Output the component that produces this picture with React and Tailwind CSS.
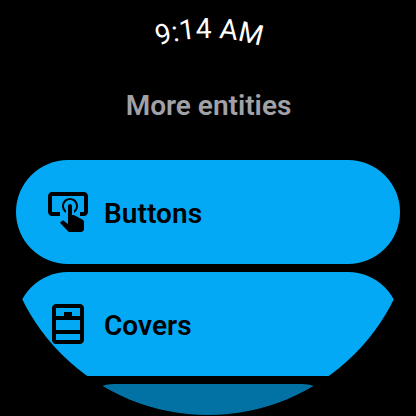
import React from "react";

function CurvedClock({ time }) {
  return (
    <svg className="block h-16 w-full fill-white" viewBox="0 0 416 64">
      <path id="clock-arc" d="M 39 208 A 170 170 0 0 1 379 208" fill="none" />
      <text className="font-['Roboto',sans-serif] text-[28px] tracking-[0.1px]" textAnchor="middle">
        <textPath href="#clock-arc" startOffset="50.1%">{time}</textPath>
      </text>
    </svg>
  );
}

function TapButtonIcon() {
  return (
    <svg className="size-12 shrink-0 fill-black" viewBox="0 0 24 24">
      <path d="M13 5C15.21 5 17 6.79 17 9C17 10.5 16.2 11.77 15 12.46V11.24C15.61 10.69 16 9.89 16 9C16 7.34 14.66 6 13 6S10 7.34 10 9C10 9.89 10.39 10.69 11 11.24V12.46C9.8 11.77 9 10.5 9 9C9 6.79 10.79 5 13 5M20 20.5C19.97 21.32 19.32 21.97 18.5 22H13C12.62 22 12.26 21.85 12 21.57L8 17.37L8.74 16.6C8.93 16.39 9.2 16.28 9.5 16.28H9.7L12 18V9C12 8.45 12.45 8 13 8S14 8.45 14 9V13.47L15.21 13.6L19.15 15.79C19.68 16.03 20 16.56 20 17.14V20.5M20 2H4C2.9 2 2 2.9 2 4V12C2 13.11 2.9 14 4 14H8V12H4V4H20V12H18V14H20C21.1 14 22 13.1 22 12V4C22 2.9 21.11 2 20 2Z" />
    </svg>
  );
}

function CoverIcon() {
  return (
    <svg className="size-12 shrink-0 fill-black" viewBox="0 0 24 24">
      <path
        fillRule="evenodd"
        d="M6 2H18C19.1 2 20 2.9 20 4V20C20 21.1 19.1 22 18 22H6C4.9 22 4 21.1 4 20V4C4 2.9 4.9 2 6 2M6 4V8H10V6H14V8H18V4H6M6 10V15H18V10H6M6 17V20H18V17H6Z"
      />
    </svg>
  );
}

function Chip({ icon, label }) {
  return (
    <button className="flex h-26 w-full shrink-0 items-center gap-3 rounded-full bg-[#03a9f4] pl-7 text-left text-[28px] font-semibold tracking-[0.05px] text-black">
      {icon}
      <span className="pt-1">{label}</span>
    </button>
  );
}

export default function App() {
  return (
    <div className="h-[416px] w-[416px] overflow-hidden bg-black p-px font-['Roboto',sans-serif]">
      <div className="h-[414px] w-[414px] overflow-hidden rounded-full">
        <div className="-m-px flex w-[416px] flex-col">
          <CurvedClock time="9:14 AM" />
          <h1 className="flex h-24 items-center justify-center pb-3 pl-px text-[28px] font-semibold text-[#a1a2a7]">
            More entities
          </h1>
          <div className="flex flex-col items-center gap-2 px-4">
            <Chip icon={<TapButtonIcon />} label="Buttons" />
            <Chip icon={<CoverIcon />} label="Covers" />
            <div className="h-[70px] w-[260px] rounded-full bg-[#0271a4]" />
          </div>
        </div>
      </div>
    </div>
  );
}
